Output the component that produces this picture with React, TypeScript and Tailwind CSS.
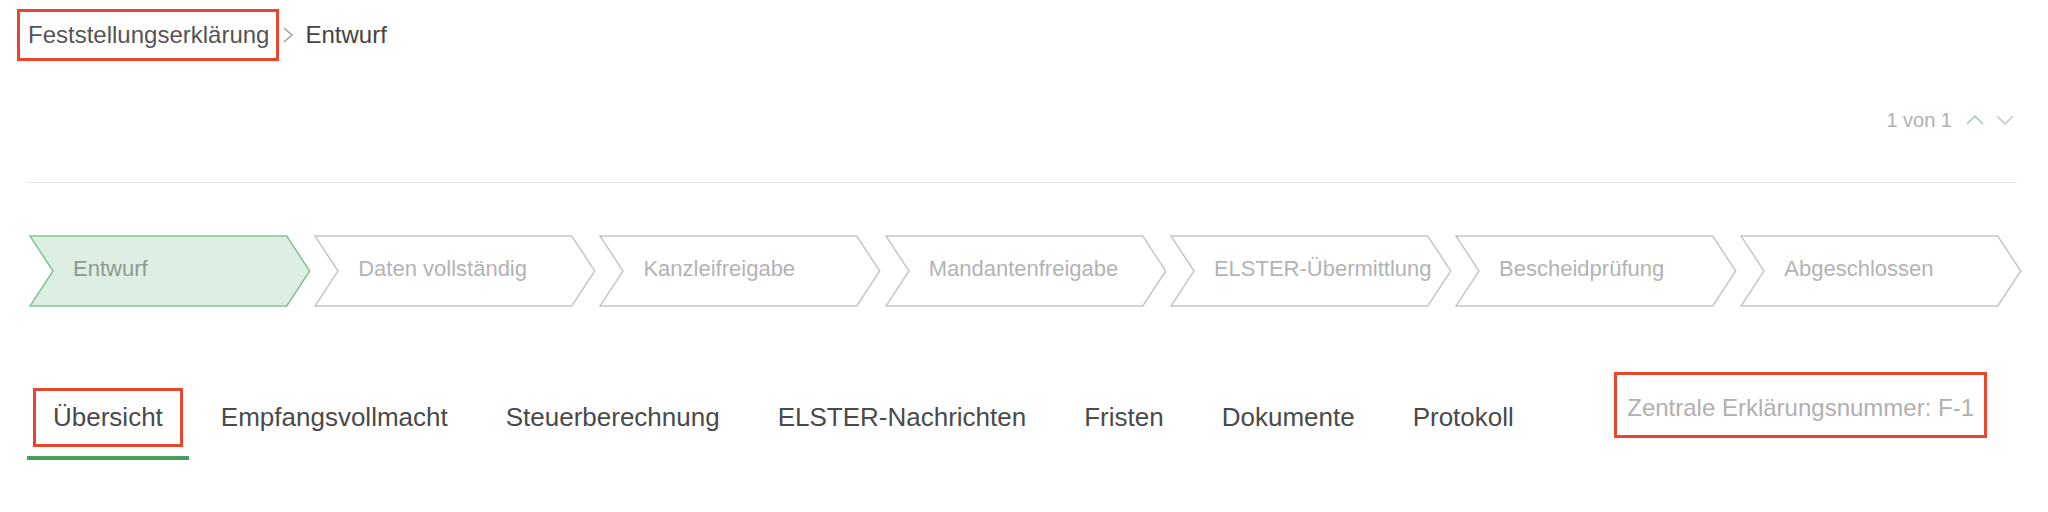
import React from 'react'

const STEPS = [
  'Entwurf',
  'Daten vollständig',
  'Kanzleifreigabe',
  'Mandantenfreigabe',
  'ELSTER-Übermittlung',
  'Bescheidprüfung',
  'Abgeschlossen',
]

const TABS = ['Übersicht', 'Empfangsvollmacht', 'Steuerberechnung', 'ELSTER-Nachrichten', 'Fristen', 'Dokumente', 'Protokoll']

function Step({ label, active }: { label: string; active: boolean }) {
  return (
    <div className="relative flex-1 h-[72px] flex items-center pl-[44px] pb-[6px]">
      <svg className="absolute inset-0 w-full h-full" viewBox="0 0 282 72" preserveAspectRatio="none">
        <polygon
          points="1,1 258,1 281,36 258,71 1,71 24,36"
          fill={active ? '#ddeee2' : '#ffffff'}
          stroke={active ? '#82c293' : '#c6c6c6'}
          strokeWidth="1.5"
          vectorEffect="non-scaling-stroke"
        />
      </svg>
      <span className={`relative text-[22px] whitespace-nowrap ${active ? 'text-[#8b9a91]' : 'text-[#b3b3b3]'}`}>{label}</span>
    </div>
  )
}

export default function App() {
  return (
    <div className="w-[2048px] h-[512px] bg-white overflow-hidden font-['Liberation_Sans',Arial,sans-serif]">
      {/* breadcrumb */}
      <div className="flex items-center pt-[9px] pl-[17px]">
        <div className="h-[52px] flex items-center border-[3px] border-[#e9472d] pl-[8px] pr-[7px] text-[24px] text-[#555555]">
          Feststellungserklärung
        </div>
        <svg className="ml-[4px]" width="10" height="16" viewBox="0 0 10 16">
          <polyline points="1,1 9,8 1,15" fill="none" stroke="#9a9a9a" strokeWidth="1.3" />
        </svg>
        <span className="ml-[12px] text-[24px] text-[#444444]">Entwurf</span>
      </div>

      {/* pager */}
      <div className="flex items-center justify-end h-[24px] mt-[47px] pr-[34px]">
        <span className="text-[20px] text-[#b0b0b0]">1 von 1</span>
        <svg className="ml-[14px]" width="18" height="10" viewBox="0 0 18 10">
          <polyline points="1,9 9,1 17,9" fill="none" stroke="#93c9a0" strokeWidth="1.4" />
        </svg>
        <svg className="ml-[12px]" width="18" height="10" viewBox="0 0 18 10">
          <polyline points="1,1 9,9 17,1" fill="none" stroke="#c4c4c4" strokeWidth="1.4" />
        </svg>
      </div>

      <div className="mt-[50px] ml-[26px] mr-[31px] border-t border-[#e6e6e6]" />

      {/* status steps */}
      <div className="flex gap-[3.5px] mt-[52px] pl-[29px] pr-[26px]">
        {STEPS.map((s, i) => (
          <Step key={s} label={s} active={i === 0} />
        ))}
      </div>

      {/* tabs */}
      <div className="flex items-start gap-[6px] mt-[65px] pl-[27px]">
        {TABS.map((t, i) => (
          <div key={t} className="flex flex-col">
            <div className="px-[6px] pt-[16px]">
              <div
                className={`h-[59px] flex items-center px-[17px] border-[3px] text-[26px] text-[#4a4a4a] whitespace-nowrap ${
                  i === 0 ? 'border-[#e9472d]' : 'border-transparent'
                }`}
              >
                {t}
              </div>
            </div>
            <div className={`mt-[9px] h-[4px] ${i === 0 ? 'bg-[#4a9c5d]' : 'bg-transparent'}`} />
          </div>
        ))}
        <div className="ml-auto mr-[61px] h-[66px] flex items-center pt-[6px] px-[10px] border-[3px] border-[#e9472d] text-[24px] text-[#b0b0b0] whitespace-nowrap">
          Zentrale Erklärungsnummer: F-1
        </div>
      </div>
    </div>
  )
}
